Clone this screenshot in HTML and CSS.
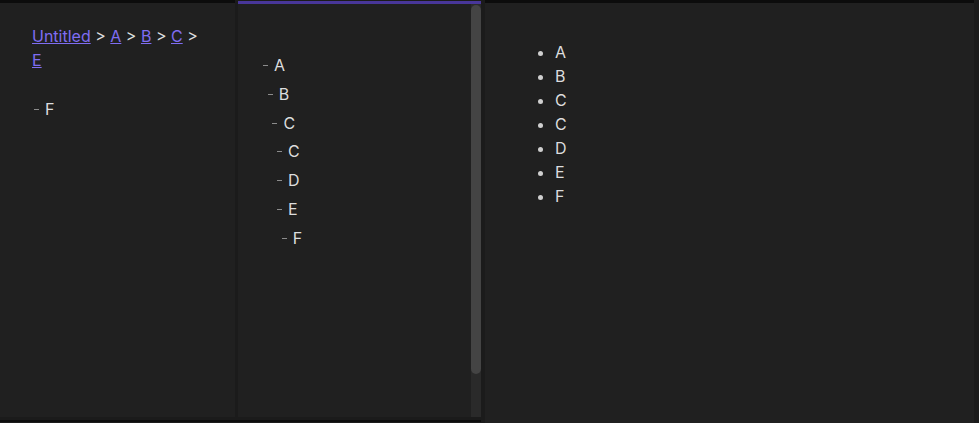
FILE: index.html
```html
<!DOCTYPE html>
<html>
<head>
<meta charset="utf-8">
<link rel="stylesheet" href="styles.css">
</head>
<body>
<div class="workspace">
  <div class="split">
    <div class="split-panes">
      <div class="pane pane-left">
        <div class="breadcrumb"><a href="#">Untitled</a> &gt; <a href="#">A</a> &gt; <a href="#">B</a> &gt; <a href="#">C</a> &gt; <a href="#">E</a></div>
        <div class="tree tree-left">
          <div class="node"><span class="dash"></span>F</div>
        </div>
      </div>
      <div class="pane pane-mid">
        <div class="mid-content">
          <div class="tree">
            <div class="node"><span class="dash"></span>A</div>
            <div class="kids">
              <div class="node"><span class="dash"></span>B</div>
              <div class="kids">
                <div class="node"><span class="dash"></span>C</div>
                <div class="kids">
                  <div class="node"><span class="dash"></span>C</div>
                  <div class="node"><span class="dash"></span>D</div>
                  <div class="node"><span class="dash"></span>E</div>
                  <div class="kids">
                    <div class="node"><span class="dash"></span>F</div>
                  </div>
                </div>
              </div>
            </div>
          </div>
        </div>
        <div class="scrollbar"><div class="thumb"></div></div>
      </div>
    </div>
    <div class="split-line"></div>
  </div>
  <div class="pane pane-right">
    <ul class="list">
      <li>A</li>
      <li>B</li>
      <li>C</li>
      <li>C</li>
      <li>D</li>
      <li>E</li>
      <li>F</li>
    </ul>
  </div>
</div>
</body>
</html>
```

FILE: styles.css
```css
html, body {
  margin: 0;
  padding: 0;
  background: #1b1b1b;
}
body {
  font-family: Inter, "Noto Sans", sans-serif;
  font-size: 16px;
  color: #dcddde;
}
.workspace {
  display: flex;
  height: 423px;
  overflow: hidden;
}
.split {
  display: flex;
  flex-direction: column;
  width: 481px;
}
.split-panes {
  display: flex;
  gap: 3px;
  height: 420px;
}
.split-line {
  height: 2px;
  background: #0c0c0c;
}
.pane {
  background: #202020;
  box-sizing: border-box;
}
.pane-left {
  width: 235px;
  height: 417px;
  border-top: 3px solid #0c0c0c;
  padding: 21px 32px 0 32px;
}
.breadcrumb {
  line-height: 24px;
}
.breadcrumb a {
  color: #7f6df2;
  text-decoration: underline;
}
.tree-left {
  margin-top: 25px;
}
.tree-left .node {
  line-height: 24px;
  padding-left: 2px;
}
.pane-mid {
  width: 243px;
  height: 416px;
  margin-top: 1px;
  border-top: 3px solid #483699;
  display: flex;
}
.mid-content {
  flex: 1;
  padding: 47px 0 0 25px;
}
.node {
  line-height: 28.8px;
  white-space: nowrap;
}
.kids {
  padding-left: 4.7px;
}
.dash {
  display: inline-block;
  width: 5px;
  height: 1px;
  background: #8c8c8c;
  vertical-align: 5px;
  margin-right: 6px;
}
.scrollbar {
  width: 10px;
  background: #2a2a2a;
  padding-top: 1px;
}
.thumb {
  height: 369px;
  background: #444444;
  border-radius: 5px;
}
.pane-right {
  width: 489px;
  height: 423px;
  margin-left: 4px;
  border-top: 3px solid #0c0c0c;
  padding: 37px 31px 0 30px;
}
.list {
  margin: 0;
  padding-left: 40px;
  line-height: 24px;
}
.list li::marker {
  color: #cfcfcf;
}
```
